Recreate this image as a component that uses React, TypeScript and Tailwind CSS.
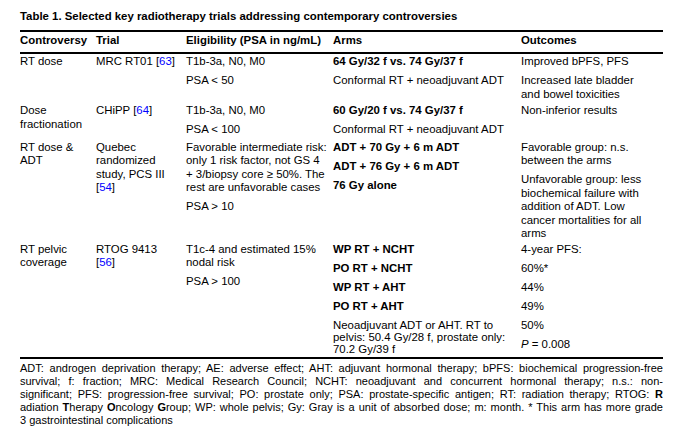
import React from 'react';

const Ref = ({ n }: { n: string }) => (
  <>
    [<span className="text-[#0000ff]">{n}</span>]
  </>
);

const Cell = ({ children, bold }: { children: React.ReactNode; bold?: boolean }) => (
  <div className={`flex flex-col gap-[5.5px] whitespace-nowrap ${bold ? 'font-bold' : ''}`}>{children}</div>
);

const cols = 'grid grid-cols-[76px_90px_147px_188px_142px]';

const footerLines: React.ReactNode[] = [
  'ADT: androgen deprivation therapy; AE: adverse effect; AHT: adjuvant hormonal therapy; bPFS: biochemical progression-free',
  'survival; f: fraction; MRC: Medical Research Council; NCHT: neoadjuvant and concurrent hormonal therapy; n.s.: non-',
  <>
    significant; PFS: progression-free survival; PO: prostate only; PSA: prostate-specific antigen; RT: radiation therapy; RTOG: <b>R</b>
  </>,
  <>
    adiation <b>T</b>herapy <b>O</b>ncology <b>G</b>roup; WP: whole pelvis; Gy: Gray is a unit of absorbed dose; m: month. * This arm has more grade
  </>,
];

export default function App() {
  return (
    <div className="w-[686px] h-[433px] bg-white text-black pt-[10px] font-['Liberation_Sans',Arial,sans-serif] text-[11.4px] leading-[13.5px]">
      <div className="ml-[20px] w-[643px]">
        <h1 className="font-bold">Table 1. Selected key radiotherapy trials addressing contemporary controversies</h1>

        {/* header */}
        <div className={`${cols} mt-[6px] border-y-2 border-black pt-[2px] pb-[4.5px] font-bold`}>
          <div>Controversy</div>
          <div>Trial</div>
          <div>Eligibility (PSA in ng/mL)</div>
          <div>Arms</div>
          <div>Outcomes</div>
        </div>

        {/* RT dose */}
        <div className={`${cols} pt-[1.5px] pb-[3px]`}>
          <Cell>RT dose</Cell>
          <Cell>
            <div>MRC RT01 <Ref n="63" /></div>
          </Cell>
          <Cell>
            <div>T1b-3a, N0, M0</div>
            <div>PSA &lt; 50</div>
          </Cell>
          <Cell>
            <div className="font-bold">64 Gy/32 f vs. 74 Gy/37 f</div>
            <div>Conformal RT + neoadjuvant ADT</div>
          </Cell>
          <Cell>
            <div>Improved bPFS, PFS</div>
            <div>Increased late bladder<br />and bowel toxicities</div>
          </Cell>
        </div>

        {/* Dose fractionation */}
        <div className={`${cols} pb-[4px]`}>
          <Cell>
            <div>Dose<br />fractionation</div>
          </Cell>
          <Cell>
            <div>CHiPP <Ref n="64" /></div>
          </Cell>
          <Cell>
            <div>T1b-3a, N0, M0</div>
            <div>PSA &lt; 100</div>
          </Cell>
          <Cell>
            <div className="font-bold">60 Gy/20 f vs. 74 Gy/37 f</div>
            <div>Conformal RT + neoadjuvant ADT</div>
          </Cell>
          <Cell>
            <div>Non-inferior results</div>
          </Cell>
        </div>

        {/* RT dose & ADT */}
        <div className={`${cols} pb-[2px]`}>
          <Cell>
            <div>RT dose &amp;<br />ADT</div>
          </Cell>
          <Cell>
            <div>Quebec<br />randomized<br />study, PCS III<br /><Ref n="54" /></div>
          </Cell>
          <Cell>
            <div>
              Favorable intermediate risk:<br />only 1 risk factor, not GS 4<br />+ 3/biopsy core ≥ 50%. The<br />rest are unfavorable cases
            </div>
            <div>PSA &gt; 10</div>
          </Cell>
          <Cell bold>
            <div>ADT + 70 Gy + 6 m ADT</div>
            <div>ADT + 76 Gy + 6 m ADT</div>
            <div>76 Gy alone</div>
          </Cell>
          <Cell>
            <div>Favorable group: n.s.<br />between the arms</div>
            <div>
              Unfavorable group: less<br />biochemical failure with<br />addition of ADT. Low<br />cancer mortalities for all<br />arms
            </div>
          </Cell>
        </div>

        {/* RT pelvic coverage */}
        <div className={`${cols} border-b-2 border-black pb-[2px]`}>
          <Cell>
            <div>RT pelvic<br />coverage</div>
          </Cell>
          <Cell>
            <div>RTOG 9413<br /><Ref n="56" /></div>
          </Cell>
          <Cell>
            <div>T1c-4 and estimated 15%<br />nodal risk</div>
            <div>PSA &gt; 100</div>
          </Cell>
          <Cell>
            <div className="font-bold">WP RT + NCHT</div>
            <div className="font-bold">PO RT + NCHT</div>
            <div className="font-bold">WP RT + AHT</div>
            <div className="font-bold">PO RT + AHT</div>
            <div className="leading-[12px]">Neoadjuvant ADT or AHT. RT to<br />pelvis: 50.4 Gy/28 f, prostate only:<br />70.2 Gy/39 f</div>
          </Cell>
          <Cell>
            <div>4-year PFS:</div>
            <div>60%*</div>
            <div>44%</div>
            <div>49%</div>
            <div>50%</div>
            <div><i>P</i> = 0.008</div>
          </Cell>
        </div>

        {/* footnote */}
        <div className="pt-[3px] text-[11px] leading-[13px]">
          {footerLines.map((line, i) => (
            <div key={i} className="whitespace-nowrap text-justify [text-align-last:justify]">
              {line}
            </div>
          ))}
          <div>3 gastrointestinal complications</div>
        </div>
      </div>
    </div>
  );
}
